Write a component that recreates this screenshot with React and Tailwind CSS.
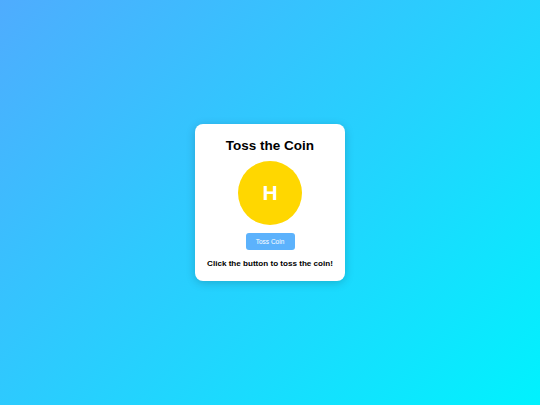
export default function App() {
  return (
    <div
      className="w-full h-screen flex items-center justify-center bg-[linear-gradient(135deg,#4facfe_0%,#00f2fe_100%)]"
      style={{ fontFamily: '"Liberation Sans", Arial, sans-serif' }}
    >
      <div className="w-[150px] bg-white rounded-[8px] shadow-[0_2px_10px_rgba(0,0,0,0.18)] flex flex-col items-center pt-[13.3px] pb-[13px]">
        <h1 className="text-[13.5px] leading-[15px] font-bold text-black m-0">Toss the Coin</h1>
        <div className="mt-[7.9px] w-[64px] h-[64px] rounded-full bg-[#ffd700] flex items-center justify-center">
          <span className="text-white font-bold text-[21px] leading-none">H</span>
        </div>
        <button className="mt-[8.5px] w-[49px] h-[17px] rounded-[3px] bg-[#5cb2fc] text-white text-[6.5px] flex items-center justify-center">
          Toss Coin
        </button>
        <p className="mt-[8.5px] text-[8.1px] leading-[9px] font-bold text-black">
          Click the button to toss the coin!
        </p>
      </div>
    </div>
  );
}
